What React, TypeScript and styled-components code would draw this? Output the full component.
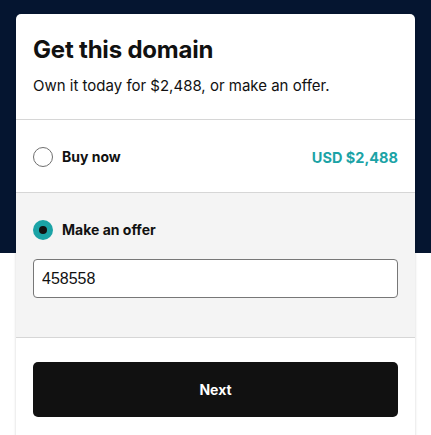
import React, { useState } from "react";
import styled, { createGlobalStyle } from "styled-components";

const GlobalStyle = createGlobalStyle`
  html, body {
    margin: 0;
    padding: 0;
  }
  body {
    font-family: Inter, "Noto Sans", sans-serif;
    color: #111111;
    background: linear-gradient(#051530 0, #051530 253px, #ffffff 253px);
    min-height: 435px;
  }
`;

const Page = styled.div`
  padding: 14px 16px 0;
  height: 421px;
  overflow: hidden;
`;

const Card = styled.div`
  background: #ffffff;
  border-radius: 5px;
  box-shadow: 0 1px 3px rgba(0, 0, 0, 0.18);
  min-height: 440px;
`;

const Header = styled.div`
  padding: 21px 17px 23px;
  border-bottom: 1px solid #d6d6d6;
`;

const Title = styled.h1`
  margin: 0;
  font-size: 24px;
  font-weight: 700;
  line-height: 30px;
  letter-spacing: -0.2px;
`;

const Subtitle = styled.p`
  margin: 11px 0 0;
  font-size: 15px;
  line-height: 20px;
`;

const Option = styled.div<{ $active?: boolean }>`
  padding: ${(p) => (p.$active ? "27px 17px 24px" : "27px 17px 25px")};
  background: ${(p) => (p.$active ? "#f4f4f4" : "#ffffff")};
  border-bottom: 1px solid #d6d6d6;
`;

const Row = styled.label`
  display: flex;
  align-items: center;
  gap: 9px;
  cursor: pointer;
`;

const Radio = styled.span<{ $checked?: boolean }>`
  box-sizing: border-box;
  width: 20px;
  height: 20px;
  border-radius: 50%;
  flex-shrink: 0;
  display: flex;
  align-items: center;
  justify-content: center;
  border: ${(p) => (p.$checked ? "none" : "1.5px solid #6f6f6f")};
  background: ${(p) => (p.$checked ? "#1ba3a6" : "#ffffff")};

  &::after {
    content: "";
    display: ${(p) => (p.$checked ? "block" : "none")};
    width: 8px;
    height: 8px;
    border-radius: 50%;
    background: #111111;
  }
`;

const Label = styled.span`
  font-size: 14px;
  font-weight: 700;
  line-height: 20px;
  flex: 1;
`;

const Price = styled.span`
  font-size: 14.5px;
  font-weight: 700;
  color: #1ba3a6;
`;

const OfferInput = styled.input`
  box-sizing: border-box;
  display: block;
  width: 100%;
  height: 39px;
  margin: 19px 0 15px;
  padding: 0 8px;
  border: 1px solid #777777;
  border-radius: 4px;
  background: #ffffff;
  font-family: "Liberation Sans", Arial, sans-serif;
  font-size: 16px;
  color: #111111;
  outline: none;
`;

const Footer = styled.div`
  padding: 24px 17px;
`;

const NextButton = styled.button`
  width: 100%;
  height: 55px;
  border: none;
  border-radius: 5px;
  background: #111111;
  color: #ffffff;
  font-family: Inter, "Noto Sans", sans-serif;
  font-size: 14px;
  font-weight: 700;
  cursor: pointer;
`;

export default function App() {
  const [choice, setChoice] = useState<"buy" | "offer">("offer");
  const [offer, setOffer] = useState("458558");

  return (
    <>
      <GlobalStyle />
      <Page>
        <Card>
          <Header>
            <Title>Get this domain</Title>
            <Subtitle>Own it today for $2,488, or make an offer.</Subtitle>
          </Header>
          <Option $active={choice === "buy"}>
            <Row onClick={() => setChoice("buy")}>
              <Radio $checked={choice === "buy"} />
              <Label>Buy now</Label>
              <Price>USD $2,488</Price>
            </Row>
          </Option>
          <Option $active={choice === "offer"}>
            <Row onClick={() => setChoice("offer")}>
              <Radio $checked={choice === "offer"} />
              <Label>Make an offer</Label>
            </Row>
            <OfferInput value={offer} onChange={(e) => setOffer(e.target.value)} />
          </Option>
          <Footer>
            <NextButton>Next</NextButton>
          </Footer>
        </Card>
      </Page>
    </>
  );
}
